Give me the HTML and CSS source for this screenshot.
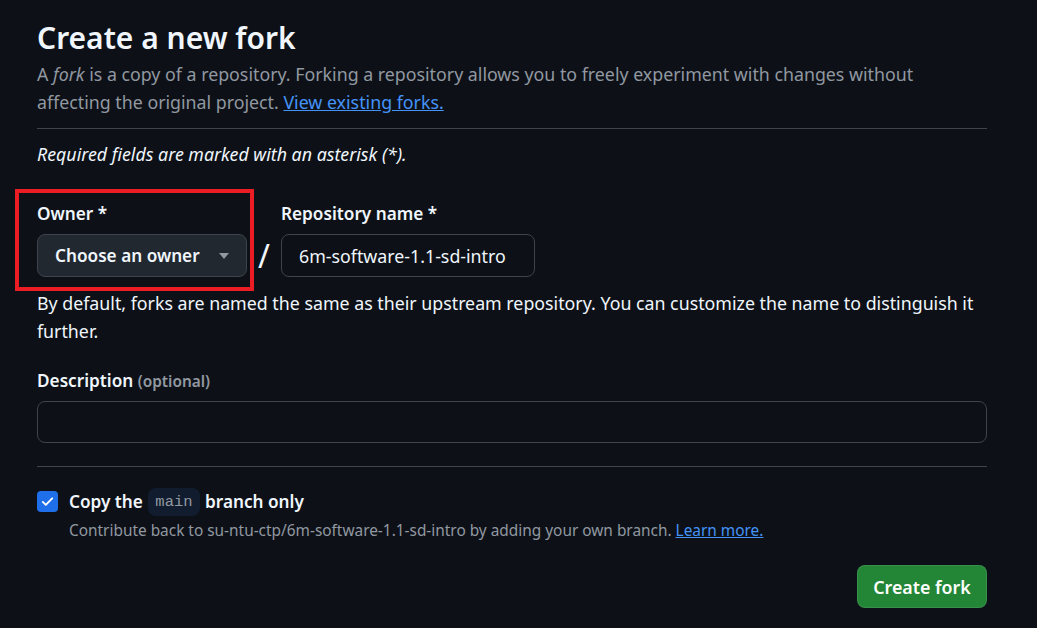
FILE: index.html
```html
<!DOCTYPE html>
<html lang="en">
<head>
<meta charset="utf-8">
<title>Create a new fork</title>
<link rel="stylesheet" href="styles.css">
</head>
<body>
<main class="page">
  <h1 class="title">Create a new fork</h1>
  <p class="lead">A <em>fork</em> is a copy of a repository. Forking a repository allows you to freely experiment with changes without affecting the original project. <a href="#" class="link">View existing forks.</a></p>
  <hr class="divider divider-top">
  <p class="required">Required fields are marked with an asterisk (*).</p>

  <div class="name-row">
    <div class="field owner-field">
      <label class="label">Owner *</label>
      <button class="owner-btn" type="button">Choose an owner <span class="caret"></span></button>
    </div>
    <span class="slash">/</span>
    <div class="field">
      <label class="label" for="repo">Repository name *</label>
      <input id="repo" class="text-input repo-input" type="text" value="6m-software-1.1-sd-intro">
    </div>
  </div>
  <p class="note">By default, forks are named the same as their upstream repository. You can customize the name to distinguish it further.</p>

  <div class="field desc-field">
    <label class="label" for="desc">Description <span class="optional">(optional)</span></label>
    <input id="desc" class="text-input desc-input" type="text">
  </div>

  <hr class="divider divider-bottom">

  <div class="check-row">
    <span class="checkbox">
      <svg viewBox="0 0 16 16" width="15" height="15" aria-hidden="true"><path d="M3 8.4l3.2 3.2L13 4.6" fill="none" stroke="#fff" stroke-width="2" stroke-linecap="round" stroke-linejoin="round"/></svg>
    </span>
    <div class="check-body">
      <div class="check-label">Copy the <code class="branch">main</code> branch only</div>
      <div class="check-note">Contribute back to su-ntu-ctp/6m-software-1.1-sd-intro by adding your own branch. <a href="#" class="link">Learn more.</a></div>
    </div>
  </div>

  <div class="actions">
    <button class="primary-btn" type="button">Create fork</button>
  </div>
</main>
</body>
</html>
```

FILE: styles.css
```css
* { box-sizing: border-box; }

html, body {
  margin: 0;
  background: #0d1117;
}

body {
  font-family: "Noto Sans", "Open Sans", sans-serif;
  font-size: 17.8px;
  line-height: 28px;
  color: #f0f6fc;
}

.page {
  width: 987px;
  padding: 18px 0 0 37px;
}

.title {
  margin: 0;
  font-size: 30px;
  line-height: 40px;
  font-weight: 600;
  color: #f0f6fc;
}

.lead {
  margin: 2px 0 0;
  color: #9198a1;
}

.link {
  color: #4493f8;
  text-decoration: underline;
}

.divider {
  border: 0;
  height: 1px;
  background: #3d444d;
  margin: 0;
}
.divider-top { margin-top: 12px; }
.divider-bottom { margin-top: 23px; }

.required {
  margin: 11px 0 0;
  font-style: italic;
}

.name-row {
  display: flex;
  align-items: flex-end;
  margin-top: 32px;
}

.field {
  display: flex;
  flex-direction: column;
}

.label {
  font-weight: 600;
  font-size: 17.2px;
  line-height: 28px;
  margin-bottom: 6px;
}

.owner-field {
  position: relative;
}
.owner-field::after {
  content: "";
  position: absolute;
  left: -22px;
  right: -7px;
  top: -11px;
  bottom: -14px;
  border: 4px solid #ec1c24;
  pointer-events: none;
}

.owner-btn {
  display: flex;
  align-items: center;
  width: 210px;
  height: 43px;
  padding: 0 16px 0 17px;
  background: #212830;
  border: 1px solid #3d444d;
  border-radius: 8px;
  color: #f0f6fc;
  font: inherit;
  font-size: 17.2px;
  font-weight: 600;
  cursor: pointer;
}

.caret {
  margin-left: auto;
  margin-right: 1px;
  width: 0;
  height: 0;
  border-left: 5.5px solid transparent;
  border-right: 5.5px solid transparent;
  border-top: 6px solid #9198a1;
}

.slash {
  width: 34px;
  height: 43px;
  text-align: center;
  font-size: 32px;
  line-height: 43px;
  color: #f0f6fc;
}

.text-input {
  height: 43px;
  background: #0d1117;
  border: 1px solid #3d444d;
  border-radius: 8px;
  color: #f0f6fc;
  font: inherit;
  padding: 0 17px;
  outline: none;
}

.repo-input {
  width: 254px;
}

.note {
  margin: 12px 0 0;
}

.desc-field {
  margin-top: 22px;
}
.desc-field .label {
  margin-bottom: 5px;
}

.optional {
  font-size: 15.4px;
  color: #9198a1;
}

.desc-input {
  width: 950px;
  height: 42px;
}

.check-row {
  display: flex;
  gap: 11px;
  margin-top: 21px;
}

.checkbox {
  flex: none;
  width: 21px;
  height: 21px;
  margin-top: 3px;
  border-radius: 4px;
  background: #1f6feb;
  display: flex;
  align-items: center;
  justify-content: center;
}

.check-label {
  font-weight: 600;
  font-size: 17.2px;
  line-height: 28px;
}

.branch {
  display: inline-block;
  padding: 0 7px;
  margin: 0 1px;
  height: 28px;
  line-height: 28px;
  border-radius: 8px;
  background: #111d2e;
  color: #9198a1;
  font-family: "Liberation Mono", "DejaVu Sans Mono", monospace;
  font-size: 15.5px;
  font-weight: 400;
  vertical-align: top;
}

.check-note {
  margin-top: 3px;
  font-size: 15.4px;
  line-height: 24px;
  color: #9198a1;
}

.actions {
  display: flex;
  justify-content: flex-end;
  width: 950px;
  margin-top: 22px;
}

.primary-btn {
  height: 43px;
  width: 130px;
  background: #238636;
  border: 1px solid rgba(240, 246, 252, 0.1);
  border-radius: 8px;
  color: #ffffff;
  font: inherit;
  font-size: 17.8px;
  font-weight: 600;
  cursor: pointer;
}
```
